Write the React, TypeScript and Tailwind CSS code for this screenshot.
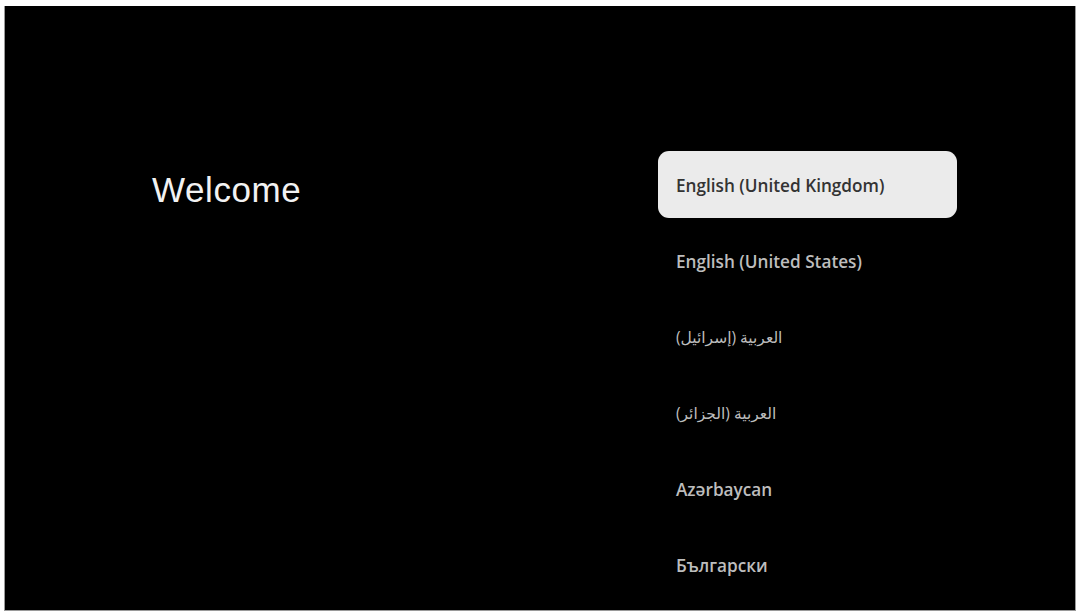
import React from "react";

type Lang = { label: string; rtl?: boolean };

const languages: Lang[] = [
  { label: "English (United Kingdom)" },
  { label: "English (United States)" },
  { label: "العربية (إسرائيل)", rtl: true },
  { label: "العربية (الجزائر)", rtl: true },
  { label: "Azərbaycan" },
  { label: "Български" },
];

export default function App() {
  return (
    <div className="w-[1081px] h-[615px] bg-white pt-[6px] pl-[4px] pr-[5px] pb-[4px]">
      <div className="w-full h-full bg-black border-l border-r border-b border-[#9a9a9a] flex">
        <div className="w-[653px] pl-[147px] pt-[164px]">
          <h1 className="text-[35px] leading-[40px] text-[#f2f2f2] font-['Liberation_Sans',Arial,sans-serif] tracking-[0.6px]">
            Welcome
          </h1>
        </div>
        <ul className="flex flex-col gap-[9px] pt-[145px] w-[299px]">
          {languages.map((lang, i) => {
            const selected = i === 0;
            return (
              <li
                key={lang.label}
                className={
                  selected
                    ? "h-[67px] rounded-[11px] bg-[#ebebeb] flex items-center px-[18px] pt-[3px]"
                    : "h-[67px] flex items-center px-[18px] pt-[3px]"
                }
              >
                {lang.rtl ? (
                  <span
                    dir="rtl"
                    className="text-[15.5px] font-normal text-[#bdbdbd] font-['Open_Sans','Noto_Sans','DejaVu_Sans',sans-serif]"
                  >
                    {lang.label}
                  </span>
                ) : (
                  <span
                    className={
                      selected
                        ? "text-[17.2px] font-semibold text-[#333333] font-['Open_Sans','Noto_Sans','DejaVu_Sans',sans-serif]"
                        : "text-[17.2px] font-semibold text-[#bdbdbd] font-['Open_Sans','Noto_Sans','DejaVu_Sans',sans-serif]"
                    }
                  >
                    {lang.label}
                  </span>
                )}
              </li>
            );
          })}
        </ul>
      </div>
    </div>
  );
}
